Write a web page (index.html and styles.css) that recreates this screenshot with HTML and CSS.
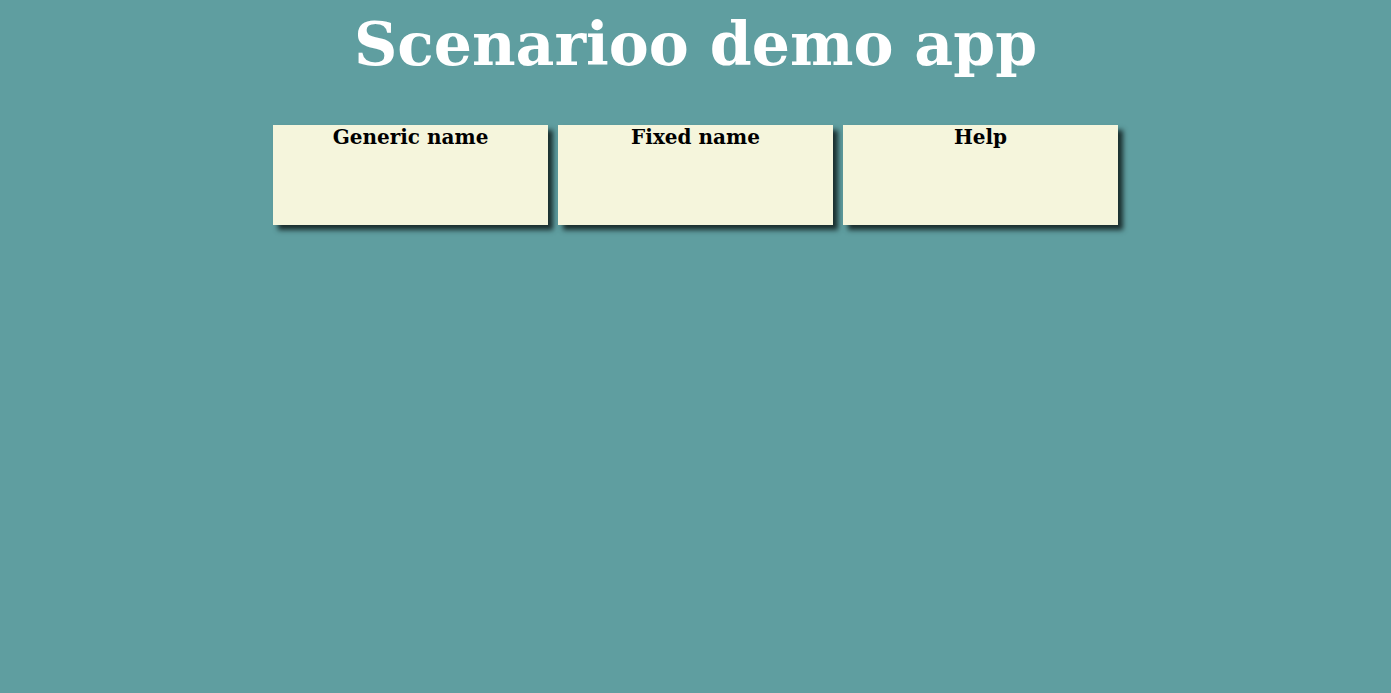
FILE: index.html
```html
<!DOCTYPE html>
<html>
<head>
<meta charset="utf-8">
<link rel="stylesheet" href="styles.css">
</head>
<body>
<h1 class="title">Scenarioo demo app</h1>
<div class="cards">
  <div class="card"><h3 class="card-title">Generic name</h3></div>
  <div class="card"><h3 class="card-title">Fixed name</h3></div>
  <div class="card"><h3 class="card-title">Help</h3></div>
</div>
</body>
</html>
```
FILE: styles.css
```css
html, body {
  margin: 0;
  padding: 0;
  background: #5f9ea0;
  font-family: "DejaVu Serif", serif;
}
body {
  min-height: 100vh;
}
.title {
  margin: 0;
  padding-top: 6px;
  text-align: center;
  color: #ffffff;
  font-size: 60px;
  font-weight: bold;
  line-height: 76px;
}
.cards {
  display: flex;
  justify-content: center;
  gap: 10px;
  margin-top: 43px;
  padding-bottom: 20px;
}
.card {
  width: 275px;
  height: 100px;
  background: #f5f5dc;
  box-shadow: 5px 5px 5px #1a2e2e;
}
.card-title {
  margin: 0;
  text-align: center;
  font-size: 20px;
  font-weight: bold;
  line-height: 24px;
  color: #000;
}
```
